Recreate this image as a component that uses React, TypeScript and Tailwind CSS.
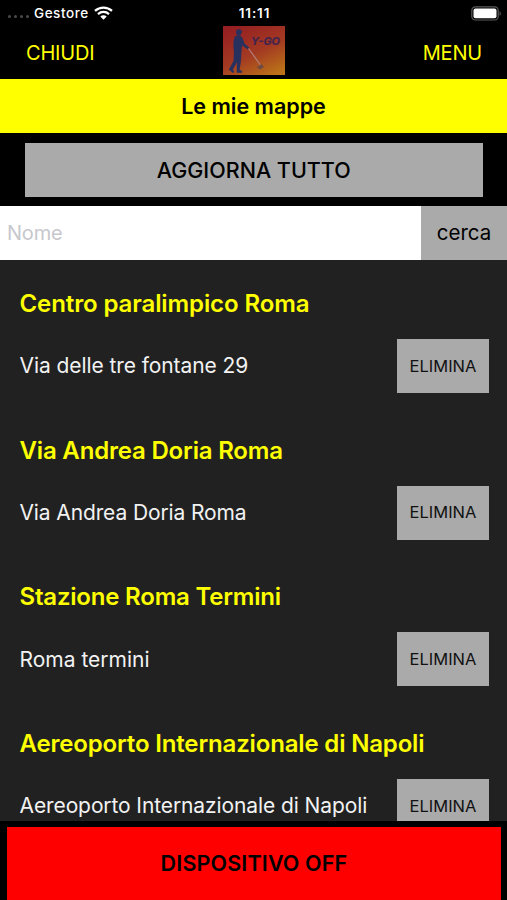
import React from 'react';

const MAPS = [
  { name: 'Centro paralimpico Roma', address: 'Via delle tre fontane 29', nameClass: 'tracking-[-0.1px]', addressClass: 'tracking-[-0.08px]' },
  { name: 'Via Andrea Doria Roma', address: 'Via Andrea Doria Roma', nameClass: 'tracking-[-0.18px]', addressClass: 'tracking-[-0.12px]' },
  { name: 'Stazione Roma Termini', address: 'Roma termini', nameClass: 'tracking-[-0.2px]', addressClass: 'tracking-[0px]' },
  { name: 'Aereoporto Internazionale di Napoli', address: 'Aereoporto Internazionale di Napoli', nameClass: 'tracking-[-0.16px]', addressClass: 'tracking-[-0.1px]' },
];

const WifiIcon = () => (
  <svg width="19" height="14" viewBox="0 0 19 14" fill="none">
    <path d="M1 4.9C5.8.5 13.2.5 18 4.9" stroke="#fff" strokeWidth="2.3" />
    <path d="M4 8.1c3.1-2.9 7.9-2.9 11 0" stroke="#fff" strokeWidth="2.2" />
    <path d="M6.3 10.6c1.8-1.7 4.6-1.7 6.4 0L9.5 13.8z" fill="#fff" />
  </svg>
);

const BatteryIcon = () => (
  <svg width="31" height="15" viewBox="0 0 31 15" fill="none">
    <rect x="0.8" y="0.8" width="26.4" height="13.2" rx="3.6" stroke="#5c5c5c" strokeWidth="1.2" />
    <rect x="2.5" y="2.5" width="23" height="9.8" rx="2" fill="#fff" />
    <path d="M28.6 5.2c1.6.6 1.6 4 0 4.6z" fill="#5c5c5c" />
  </svg>
);

const Logo = () => (
  <svg width="62" height="49" viewBox="0 0 62 49">
    <defs>
      <linearGradient id="sunset" x1="0.2" y1="0" x2="0.8" y2="1">
        <stop offset="0" stopColor="#961f22" />
        <stop offset="0.55" stopColor="#a33a22" />
        <stop offset="1" stopColor="#bb7218" />
      </linearGradient>
    </defs>
    <rect width="62" height="49" fill="url(#sunset)" />
    <g fill="#28305e">
      <path d="M13 5.2c.8-2.4 4.6-2.6 5.5-.2l1.2 1-1.3.6c0 2-1.1 3.4-2.5 3.5-1.8 0-3-1.7-2.9-4.9z" />
      <path d="M12.5 9.800l5 .2c2.200 1.200 3.200 4.300 3.800 7.200l5 4.500-1.300 1.800-6-3.900-.7 7-7.200.2c-.8-5.700-1.400-13.300 1.400-17z" />
      <path d="M11 25l7.300.2c.2 7-.6 12.500-1.700 18.200l2.600 2-.3 1.300h-5.200l.2-10.400-4 7.200 1.400 2.600-1.300.8-4.200-3.300 4.700-8.500z" />
    </g>
    <path d="M25.500 22.500l13 18" stroke="#b07f78" strokeWidth="1.2" />
    <path d="M33.500 41.500l5-3.500 2.500 3-4 2.500z" fill="#714b42" />
    <text x="28" y="19.2" fontSize="10.500" fontWeight="700" fontStyle="italic" fill="#43244e" stroke="#43244e" strokeWidth="0.2" textLength="29" lengthAdjust="spacingAndGlyphs">Y-GO</text>
  </svg>
);

const StatusBar = () => (
  <div className="grid h-[26px] grid-cols-3 items-center pr-[5px] pl-2 text-[13px] font-medium text-white">
    <div className="flex items-center">
      <div className="mt-[7px] flex gap-[3px]">
        <span className="size-[3px] rounded-full bg-[#4b4b4b]" />
        <span className="size-[3px] rounded-full bg-[#4b4b4b]" />
        <span className="size-[3px] rounded-full bg-[#4b4b4b]" />
        <span className="size-[3px] rounded-full bg-[#4b4b4b]" />
      </div>
      <span className="mr-[5px] ml-[5px] pt-px text-[13.5px] tracking-[0.55px]">Gestore</span>
      <WifiIcon />
    </div>
    <span className="pt-px pr-px text-center text-[13.5px] font-semibold tracking-[0.9px]">11:11</span>
    <div className="flex justify-end">
      <BatteryIcon />
    </div>
  </div>
);

export default function App() {
  return (
    <div className="flex h-[900px] w-[507px] flex-col overflow-hidden bg-black font-['Inter','Liberation_Sans',sans-serif]">
      <header className="h-[79px] shrink-0">
        <StatusBar />
        <div className="flex h-[49px] items-center justify-between pr-[25px] pl-[26px] text-[20px] text-[#ffff00]">
          <button className="w-[70px] pt-[4px] text-left tracking-[-0.2px]">CHIUDI</button>
          <Logo />
          <button className="w-[70px] pt-[4px] text-right tracking-[-0.2px]">MENU</button>
        </div>
      </header>

      <h1 className="flex h-[54px] shrink-0 items-center justify-center bg-[#ffff00] pt-px text-[21.5px] font-semibold text-black">
        Le mie mappe
      </h1>

      <div className="h-[73px] shrink-0 px-[25px] pt-[9.5px]">
        <button className="h-[54px] w-[457.5px] bg-[#aaaaaa] pt-px text-[21.5px] font-medium text-black">AGGIORNA TUTTO</button>
      </div>

      <div className="flex h-[54px] shrink-0">
        <input
          placeholder="Nome"
          className="w-[421px] bg-white pr-2 pl-[7px] text-[20px] tracking-[-0.2px] text-black placeholder:text-[#c7c7cc]"
        />
        <button className="flex-1 bg-[#aaaaaa] pt-px text-[20.5px] text-black">cerca</button>
      </div>

      <main className="h-[561px] shrink-0 overflow-hidden bg-[#212121]">
        {MAPS.map((map) => (
          <section key={map.name} className="h-[146.7px] pt-[28px] pr-[18px] pl-[19.5px]">
            <h2 className={`h-[32px] text-[24px] leading-[32px] font-semibold whitespace-nowrap text-[#ffff00] ${map.nameClass}`}>{map.name}</h2>
            <div className="mt-[19px] flex h-[54px] items-center justify-between">
              <span className={`text-[21px] whitespace-nowrap text-[#f2f2f2] ${map.addressClass}`}>{map.address}</span>
              <button className="h-[54px] w-[92px] bg-[#aaaaaa] text-[16.5px] text-[#111111]">ELIMINA</button>
            </div>
          </section>
        ))}
      </main>

      <footer className="flex flex-1 bg-black pt-[6px] pr-[6px] pl-[7px]">
        <button className="flex-1 bg-[#ff0000] text-[21.5px] font-semibold tracking-[0.15px] text-black">DISPOSITIVO OFF</button>
      </footer>
    </div>
  );
}
